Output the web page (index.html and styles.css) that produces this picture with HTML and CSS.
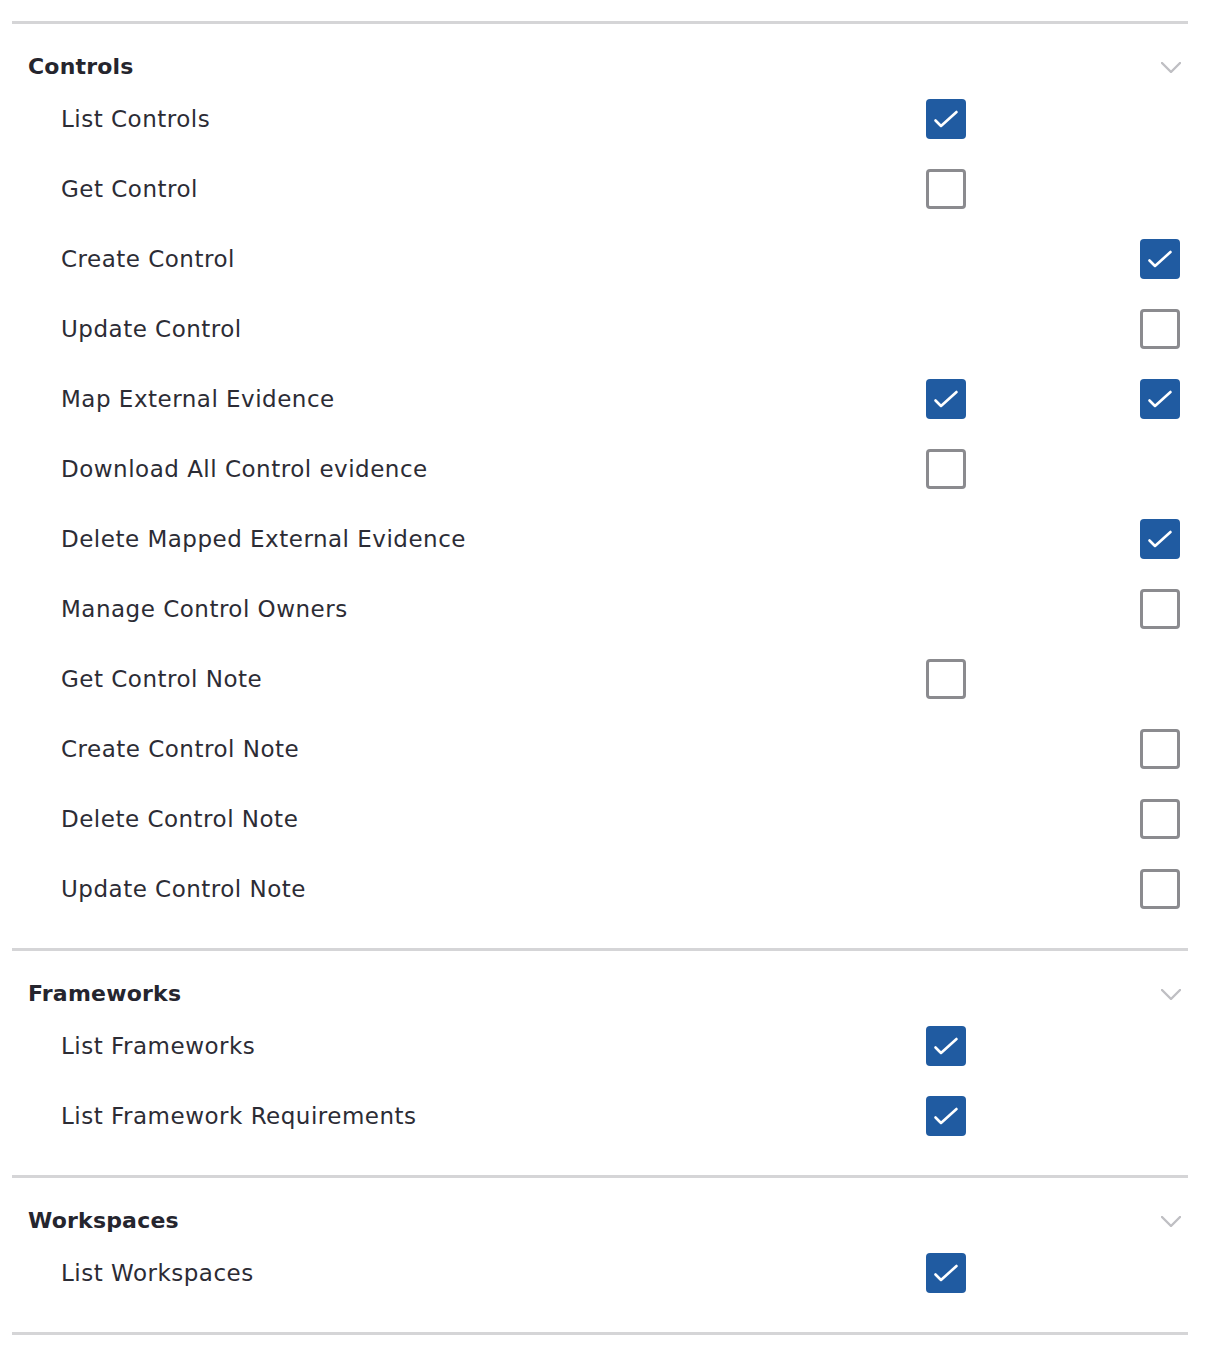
FILE: index.html
```html
<!DOCTYPE html>
<html lang="en">
<head>
<meta charset="utf-8">
<title>Permissions</title>
<link rel="stylesheet" href="styles.css">
</head>
<body>
<div class="permissions">

  <section class="group">
    <div class="group-head">
      <h2 class="group-title">Controls</h2>
      <svg class="chevron" width="20" height="11" viewBox="0 0 20 11"><polyline points="1,1 10,10 19,1"/></svg>
    </div>
    <div class="perm">
      <span class="perm-name">List Controls</span>
      <span class="box on"><svg viewBox="0 0 40 40"><polyline points="9.5,21.5 15,27 30.5,13"/></svg></span>
      <span class="cell"></span>
    </div>
    <div class="perm">
      <span class="perm-name">Get Control</span>
      <span class="box"></span>
      <span class="cell"></span>
    </div>
    <div class="perm">
      <span class="perm-name">Create Control</span>
      <span class="cell"></span>
      <span class="box on"><svg viewBox="0 0 40 40"><polyline points="9.5,21.5 15,27 30.5,13"/></svg></span>
    </div>
    <div class="perm">
      <span class="perm-name">Update Control</span>
      <span class="cell"></span>
      <span class="box"></span>
    </div>
    <div class="perm">
      <span class="perm-name">Map External Evidence</span>
      <span class="box on"><svg viewBox="0 0 40 40"><polyline points="9.5,21.5 15,27 30.5,13"/></svg></span>
      <span class="box on"><svg viewBox="0 0 40 40"><polyline points="9.5,21.5 15,27 30.5,13"/></svg></span>
    </div>
    <div class="perm">
      <span class="perm-name">Download All Control evidence</span>
      <span class="box"></span>
      <span class="cell"></span>
    </div>
    <div class="perm">
      <span class="perm-name">Delete Mapped External Evidence</span>
      <span class="cell"></span>
      <span class="box on"><svg viewBox="0 0 40 40"><polyline points="9.5,21.5 15,27 30.5,13"/></svg></span>
    </div>
    <div class="perm">
      <span class="perm-name">Manage Control Owners</span>
      <span class="cell"></span>
      <span class="box"></span>
    </div>
    <div class="perm">
      <span class="perm-name">Get Control Note</span>
      <span class="box"></span>
      <span class="cell"></span>
    </div>
    <div class="perm">
      <span class="perm-name">Create Control Note</span>
      <span class="cell"></span>
      <span class="box"></span>
    </div>
    <div class="perm">
      <span class="perm-name">Delete Control Note</span>
      <span class="cell"></span>
      <span class="box"></span>
    </div>
    <div class="perm">
      <span class="perm-name">Update Control Note</span>
      <span class="cell"></span>
      <span class="box"></span>
    </div>
  </section>

  <section class="group">
    <div class="group-head">
      <h2 class="group-title">Frameworks</h2>
      <svg class="chevron" width="20" height="11" viewBox="0 0 20 11"><polyline points="1,1 10,10 19,1"/></svg>
    </div>
    <div class="perm">
      <span class="perm-name">List Frameworks</span>
      <span class="box on"><svg viewBox="0 0 40 40"><polyline points="9.5,21.5 15,27 30.5,13"/></svg></span>
      <span class="cell"></span>
    </div>
    <div class="perm">
      <span class="perm-name">List Framework Requirements</span>
      <span class="box on"><svg viewBox="0 0 40 40"><polyline points="9.5,21.5 15,27 30.5,13"/></svg></span>
      <span class="cell"></span>
    </div>
  </section>

  <section class="group">
    <div class="group-head">
      <h2 class="group-title">Workspaces</h2>
      <svg class="chevron" width="20" height="11" viewBox="0 0 20 11"><polyline points="1,1 10,10 19,1"/></svg>
    </div>
    <div class="perm">
      <span class="perm-name">List Workspaces</span>
      <span class="box on"><svg viewBox="0 0 40 40"><polyline points="9.5,21.5 15,27 30.5,13"/></svg></span>
      <span class="cell"></span>
    </div>
  </section>

</div>
</body>
</html>
```

FILE: styles.css
```css
* {
  box-sizing: border-box;
}

body {
  margin: 0;
  background: #ffffff;
  font-family: "DejaVu Sans", "Noto Sans", sans-serif;
  color: #2c2c35;
}

.permissions {
  width: 1176px;
  margin: 21px 0 0 12px;
  border-bottom: 3px solid #d5d5d7;
}

.group {
  border-top: 3px solid #d5d5d7;
  padding: 28px 0 24px;
}

.group-head {
  display: flex;
  align-items: center;
  justify-content: space-between;
  height: 28px;
  padding: 0 7px 0 16px;
  margin-bottom: 4px;
}

.group-title {
  margin: 2px 0 0;
  font-size: 22px;
  font-weight: 700;
  letter-spacing: 0.2px;
  color: #25252e;
  line-height: 28px;
}

.chevron {
  margin-top: 2px;
  fill: none;
  stroke: #bfbfc3;
  stroke-width: 2.4;
  stroke-linecap: round;
  stroke-linejoin: round;
}

.perm {
  display: grid;
  grid-template-columns: 1fr 40px 40px;
  column-gap: 174px;
  align-items: center;
  height: 70px;
  padding: 0 8px 0 49px;
}

.perm-name {
  padding-top: 0;
  font-size: 23px;
  letter-spacing: 0.5px;
  line-height: 28px;
}

.box {
  width: 40px;
  height: 40px;
  border: 3px solid #8b8b8f;
  border-radius: 4px;
  background: #ffffff;
}

.box.on {
  border: none;
  background: #205ba1;
}

.box svg {
  display: block;
  width: 40px;
  height: 40px;
  fill: none;
  stroke: #ffffff;
  stroke-width: 2.6;
  stroke-linecap: round;
  stroke-linejoin: round;
}
```
